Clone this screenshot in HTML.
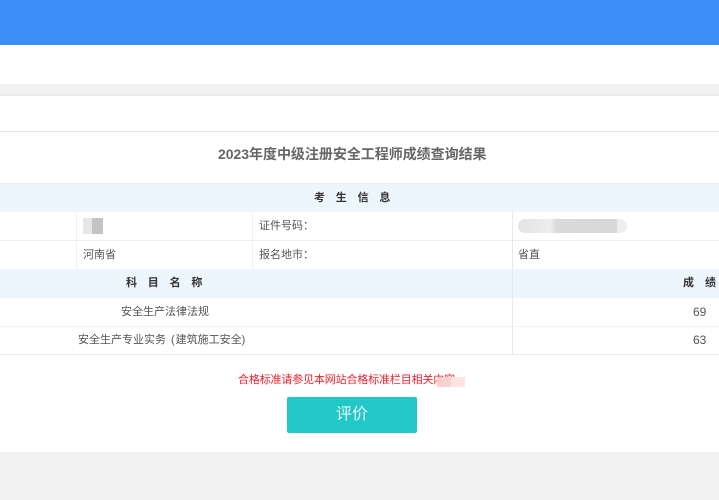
<!DOCTYPE html>
<html lang="zh">
<head>
<meta charset="utf-8">
<style>
html,body{margin:0;padding:0;width:719px;height:500px;overflow:hidden;background:#f2f2f2}
body{position:relative;font-family:"Liberation Sans","Noto Sans CJK SC",sans-serif;font-size:11px;color:#555}
div{position:absolute;box-sizing:border-box}
.t{white-space:nowrap;line-height:16px}
.b{font-weight:bold;color:#333}
</style>
</head>
<body>
<div style="left:0;top:0;width:719px;height:45px;background:#3d8ef8"></div>
<div style="left:0;top:45px;width:719px;height:39px;background:#fff"></div>
<div style="left:0;top:84px;width:719px;height:11px;background:#f2f2f2"></div>
<div style="left:0;top:94px;width:719px;height:2px;background:#ebebeb"></div>
<div style="left:0;top:96px;width:719px;height:356px;background:#fff"></div>

<div style="left:0;top:131px;width:719px;height:1px;background:#e8e8e8"></div>
<div class="t" style="left:218px;top:145px;font-size:14px;font-weight:bold;color:#666;line-height:18px;letter-spacing:-.03px">2023年度中级注册安全工程师成绩查询结果</div>

<div style="left:0;top:183px;width:719px;height:29px;background:#eef6fd;border-top:1px solid #e6edf3"></div>
<div style="left:0;top:269px;width:719px;height:29px;background:#eef6fd"></div>
<div style="left:0;top:240px;width:719px;height:1px;background:#efefef"></div>
<div style="left:0;top:326px;width:719px;height:1px;background:#f2f2f2"></div>
<div style="left:0;top:354px;width:719px;height:1px;background:#ebebeb"></div>

<div style="left:76px;top:212px;width:1px;height:57px;background:#f0f0f0"></div>
<div style="left:252px;top:212px;width:1px;height:57px;background:#f0f0f0"></div>
<div style="left:512px;top:212px;width:1px;height:142px;background:#e6e8eb"></div>

<div class="t b" style="left:314px;top:190px;letter-spacing:10.8px">考生信息</div>
<div class="t" style="left:259px;top:218px">证件号码：</div>
<div class="t" style="left:83px;top:247px">河南省</div>
<div class="t" style="left:259px;top:247px">报名地市：</div>
<div class="t" style="left:518px;top:247px">省直</div>

<div style="left:83px;top:218px;width:20px;height:16px;background:linear-gradient(90deg,#e6e6e6 0,#e6e6e6 45%,#c4c4c4 45%,#c4c4c4 100%)"></div>
<div style="left:518px;top:219px;width:109px;height:14px;border-radius:7px;background:linear-gradient(90deg,#e4e4e4 0,#ededed 30%,#dadada 35%,#d8d8d8 90%,#efefef 92%)"></div>

<div class="t b" style="left:126px;top:275px;letter-spacing:10.8px">科目名称</div>
<div class="t b" style="left:683px;top:275px;letter-spacing:11px">成绩</div>

<div class="t" style="left:121px;top:304px">安全生产法律法规</div>
<div class="t" style="left:78px;top:332px">安全生产专业实务<span style="margin-left:5px">(</span><span style="margin-left:1px">建筑施工安全</span>)</div>
<div class="t" style="left:693px;top:304px;font-size:12px">69</div>
<div class="t" style="left:693px;top:332px;font-size:12px">63</div>

<div class="t" style="left:238px;top:372px;color:#f0202c;letter-spacing:-.15px">合格标准请参见本网站合格标准栏目相关内容</div>
<div style="left:437px;top:377px;width:28px;height:10px;background:linear-gradient(90deg,#fbd0d0 0,#fbd0d0 50%,#fde4e4 50%,#fde4e4 100%)"></div>

<div style="left:287px;top:397px;width:130px;height:36px;background:#22c7c7;border-radius:2px"></div>
<div class="t" style="left:287px;top:397px;width:130px;height:36px;line-height:36px;text-align:center;color:#eafafa;font-size:16px">评价</div>
</body>
</html>
